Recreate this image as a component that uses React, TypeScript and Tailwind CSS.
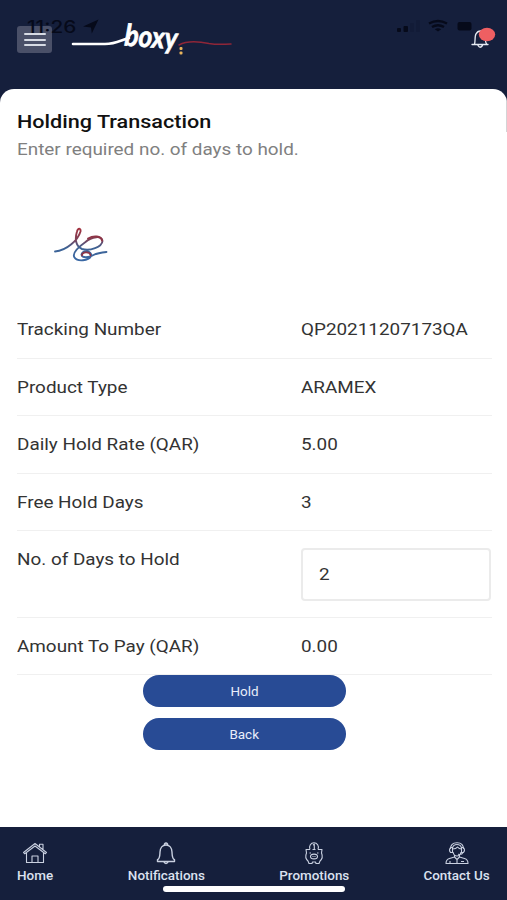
import React from "react";

type WideProps = { children: React.ReactNode; className?: string };

// Type is set wide everywhere in the app
const Wide: React.FunctionComponent<WideProps> = ({
  children,
  className = "origin-left scale-x-[1.18]",
}) => (
  <span className={`inline-block whitespace-nowrap ${className}`}>
    {children}
  </span>
);

const StatusBar = () => (
  <div className="absolute inset-x-0 top-0 h-10 text-[#060a1a] pointer-events-none">
    <span className="absolute left-[27px] top-[17px] origin-left scale-x-[1.22] font-['Inter'] text-[17px] leading-5 font-medium">
      11:26
    </span>
    <svg className="absolute left-0 top-0" width="507" height="40" fill="currentColor">
      <path d="M98.500 19.500 83 26.500l8 1 .8 6z" />
      <rect x="397" y="28" width="4" height="4" rx="1" />
      <rect x="403.500" y="26" width="4.500" height="6" rx="1" />
      <rect x="410" y="23" width="4" height="9" rx="1" opacity=".15" />
      <rect x="416" y="20" width="4" height="12" rx="1" opacity=".15" />
      <path d="M438 31.500l-3.200-2.200q3.200-2 6.400 0z" />
      <path
        d="M429 23.500q9-5 18 0M432 27q6-3.500 12 0"
        fill="none"
        stroke="currentColor"
        strokeWidth="2.400"
      />
      <rect x="457.500" y="22" width="14" height="8.500" rx="2" />
    </svg>
  </div>
);

const Logo = () => (
  <svg width="164" height="60" viewBox="0 -8 164 60" fill="none" strokeLinecap="round">
    <path d="M3 26H35C46 26 50 22.500 59 20" stroke="#fff" strokeWidth="2.600" />
    <text
      x="54"
      y="27.500"
      fill="#fff"
      stroke="#fff"
      strokeWidth=".7"
      textLength="53"
      lengthAdjust="spacingAndGlyphs"
      transform="rotate(4 54 27.500)"
      className="font-['Lato'] text-[30px] leading-none font-bold italic"
    >
      boxy
    </text>
    <path d="M109 27c9-5 20-3.500 30-1.500 8 1.400 14 1 22 .5" stroke="#8f2638" strokeWidth="1.500" />
    <rect x="109.500" y="29" width="3" height="3" rx="1" fill="#e8b45c" />
    <rect x="109.500" y="33.500" width="3" height="3" rx="1" fill="#e8b45c" />
  </svg>
);

const Header = () => (
  <header className="relative h-[89px] bg-[#151f3c]">
    <div className="flex items-start">
      <button className="ml-[17px] mt-[26px] flex h-[27px] w-[35px] flex-col items-center justify-center gap-[3.500px] rounded-[3px] bg-[#4a5068]">
        <span className="h-[2px] w-[22px] rounded bg-[#d7dbe4]" />
        <span className="h-[2px] w-[22px] rounded bg-[#d7dbe4]" />
        <span className="h-[2px] w-[22px] rounded bg-[#d7dbe4]" />
      </button>
      <div className="ml-[18px] mt-[10px]">
        <Logo />
      </div>
      <svg className="ml-auto mr-[11px] mt-[26px]" width="26" height="24" fill="none">
        <path
          d="M2 18.500h16M4.500 18c1-2 0-8 1.500-10 1-2 3-3 4.500-3s4 1.500 4.500 4c.5 3 0 7 1.500 9M8 19.500q2 3.500 4.500 0"
          stroke="#e6eaf2"
          strokeWidth="1.300"
          strokeLinecap="round"
        />
        <ellipse cx="17" cy="8.500" rx="8.200" ry="6.700" fill="#ee5f62" />
      </svg>
    </div>
    <StatusBar />
  </header>
);

const PartnerMark = () => (
  <svg className="ml-[53px]" width="56" height="38" viewBox="0 0 56 38" fill="none" strokeLinecap="round">
    <defs>
      <linearGradient id="ribbon" x1="0" y1="0" x2="0" y2="1">
        <stop offset="0" stopColor="#a2323f" />
        <stop offset=".35" stopColor="#7b4259" />
        <stop offset=".6" stopColor="#3d6294" />
        <stop offset="1" stopColor="#3a68a4" />
      </linearGradient>
    </defs>
    {/* long stroke with the tall loop, then the right loop and the curl */}
    <g stroke="url(#ribbon)" strokeWidth="1.900">
      <path d="M2 24.500C14 23.500 25 13 27.500 4.500c.5-3.500-2.500-4-3.500 0-2.500 8-1 15 5 17.500 8 2.500 20-2 20.500-8 0-6-11-4.500-17 1-7 5-14 11-11 15.500 3 4.500 14 3.500 16.500-1.500 1.500-5.500-8.500-6-9.500-1.500 0 4 8 3 12 .5 4-2 8-2.500 13-3" />
    </g>
    <path d="M35 11.500c6-3.500 13-2.500 14 2M29 28.500c-.5-4 8-4.500 8.500 0" stroke="#8e3547" strokeWidth="1.800" />
  </svg>
);

const rows = [
  { label: "Tracking Number", value: "QP20211207173QA" },
  { label: "Product Type", value: "ARAMEX" },
  { label: "Daily Hold Rate (QAR)", value: "5.00" },
  { label: "Free Hold Days", value: "3" },
  { label: "No. of Days to Hold", value: "2", editable: true },
  { label: "Amount To Pay (QAR)", value: "0.00" },
];

const Details = () => (
  <div className="mx-[17px] mr-[15px] mt-[36px] text-base leading-5 text-[#333]">
    {rows.map(({ label, value, editable }) => (
      <div
        key={label}
        className={`grid grid-cols-[284px_1fr] border-b-[1.500px] border-[#f0f0f0] ${
          editable ? "h-[86.500px]" : "h-[57.600px]"
        }`}
      >
        <div className="pt-[19px]">
          <Wide>{label}</Wide>
        </div>
        {editable ? (
          <div className="mt-[17px] flex h-[53px] w-[190px] items-center rounded-[4px] border-2 border-[#ebebeb] pl-[16px]">
            <Wide>{value}</Wide>
          </div>
        ) : (
          <div className="pt-[19px]">
            <Wide>{value}</Wide>
          </div>
        )}
      </div>
    ))}
  </div>
);

const HomeIcon = () => (
  <svg width="26" height="24" viewBox="0 0 26 24" fill="none" stroke="currentColor" strokeWidth="1.100" strokeLinejoin="round">
    <path d="M1.500 11.500 13 2.500l11.500 9-1.200 1.300L13 5 2.700 12.800zM4.500 12v9.500h17V12M17.500 5.500V3.300h3.500v5M10 21.500v-6.500h6v6.500" />
  </svg>
);

const BellIcon = () => (
  <svg width="26" height="24" viewBox="0 0 26 24" fill="none" stroke="currentColor" strokeWidth="1.400" strokeLinejoin="round">
    <path d="M11.500 4V3q1.500-2 3 0v1M4.500 20.500v-1.800c2.500-1.200 2.300-3.700 2.500-7.700.2-4 2.500-7 6-7s5.800 3 6 7c.2 4 0 6.500 2.500 7.700v1.800zM10.500 20.500q2.500 4 5 0" />
  </svg>
);

const PiggyIcon = () => (
  <svg width="26" height="24" viewBox="0 0 26 24" fill="none" stroke="currentColor" strokeWidth="1.100" strokeLinejoin="round">
    <path d="M9 8.500C7.500 5 10 1.700 13 1.700S18.500 5 17 8.500M12 4l1.300-.8v5M11.500 8.500h3" />
    <path d="M9 8.500H5l.5 3.500c-1.300 3-.8 6 1.500 8l1 2.500h3l.5-1.500h3l.5 1.500h3l1-2.500c2.300-2 2.800-5 1.500-8l.5-3.500h-4" />
    <ellipse cx="13" cy="15.500" rx="3.500" ry="2.400" />
    <path d="M11.500 15.500h1M13.500 15.500h1M8.500 12h1.500M16 12h1.500" />
  </svg>
);

const AgentIcon = () => (
  <svg width="26" height="24" viewBox="0 0 26 24" fill="none" stroke="currentColor" strokeWidth="1.100" strokeLinejoin="round">
    <path d="M6.500 8C6.500 4 9 1.700 13 1.700S19.500 4 19.500 8M8.500 7c.5-2.500 2-3.500 4.500-3.500s4 1 4.500 3.500M6.500 6.500h2v5h-2q-2-2.500 0-5zM19.500 6.500h-2v5h2q2-2.500 0-5zM8.500 8c2 0 4-.5 5-2 1 1.300 2.500 2 4 2M9 11c.5 2.500 2 4 4 4s3.500-1.500 4-4M19 11.500q-1 2.500-5 1.800" />
    <path d="M10.500 14v2l-5 1.500q-3.500 1-3.500 5h22q0-4-3.500-5l-5-1.500v-2M10.500 16l2.500 2.500 2.500-2.500M13 18.500v4M6 20v2.500M17 20.500h3" />
  </svg>
);

const tabs = [
  { label: "Home", icon: <HomeIcon />, spot: "w-[70px]" },
  { label: "Notifications", icon: <BellIcon />, spot: "ml-[46px] w-[100px]" },
  { label: "Promotions", icon: <PiggyIcon />, spot: "ml-[48px] w-[100px]" },
  { label: "Contact Us", icon: <AgentIcon />, spot: "ml-[43px] w-[100px]" },
];

const TabBar = () => (
  <nav className="relative flex h-[73px] bg-[#151f3c] pt-[14px] text-[#c9d0e0]">
    {tabs.map(({ label, icon, spot }) => (
      <div key={label} className={`flex shrink-0 flex-col items-center ${spot}`}>
        {icon}
        <Wide className="mt-[3px] scale-x-[1.12] text-[12px] leading-4 font-medium text-[#dbe1ef]">
          {label}
        </Wide>
      </div>
    ))}
    <div className="absolute left-[163px] top-[59px] h-[6px] w-[182px] rounded-full bg-white" />
  </nav>
);

const App = () => {
  return (
    <div className="flex h-[900px] w-[507px] flex-col overflow-hidden bg-[#151f3c] font-['Roboto',sans-serif]">
      <Header />
      <main className="relative flex-1 rounded-t-[14px] bg-white">
        <div className="absolute right-0 top-[12px] h-[31px] w-px bg-[#d4d4d6]" />
        <h1 className="ml-[17px] pt-[22px] text-[18px] leading-[22px] font-medium text-[#111]">
          <Wide className="origin-left scale-x-[1.2]">Holding Transaction</Wide>
        </h1>
        <p className="ml-[17px] mt-[7px] text-base leading-5 text-[#808080]">
          <Wide>Enter required no. of days to hold.</Wide>
        </p>
        <div className="mt-[67px]">
          <PartnerMark />
        </div>
        <Details />
        <div className="ml-[143px] flex w-[203px] flex-col gap-[11px] text-[12px] text-[#e9eefa]">
          <button className="h-8 rounded-full bg-[#284b95] pt-px">
            <Wide className="scale-x-[1.12]">Hold</Wide>
          </button>
          <button className="h-8 rounded-full bg-[#284b95] pt-px">
            <Wide className="scale-x-[1.12]">Back</Wide>
          </button>
        </div>
      </main>
      <TabBar />
    </div>
  );
};

export default App;
